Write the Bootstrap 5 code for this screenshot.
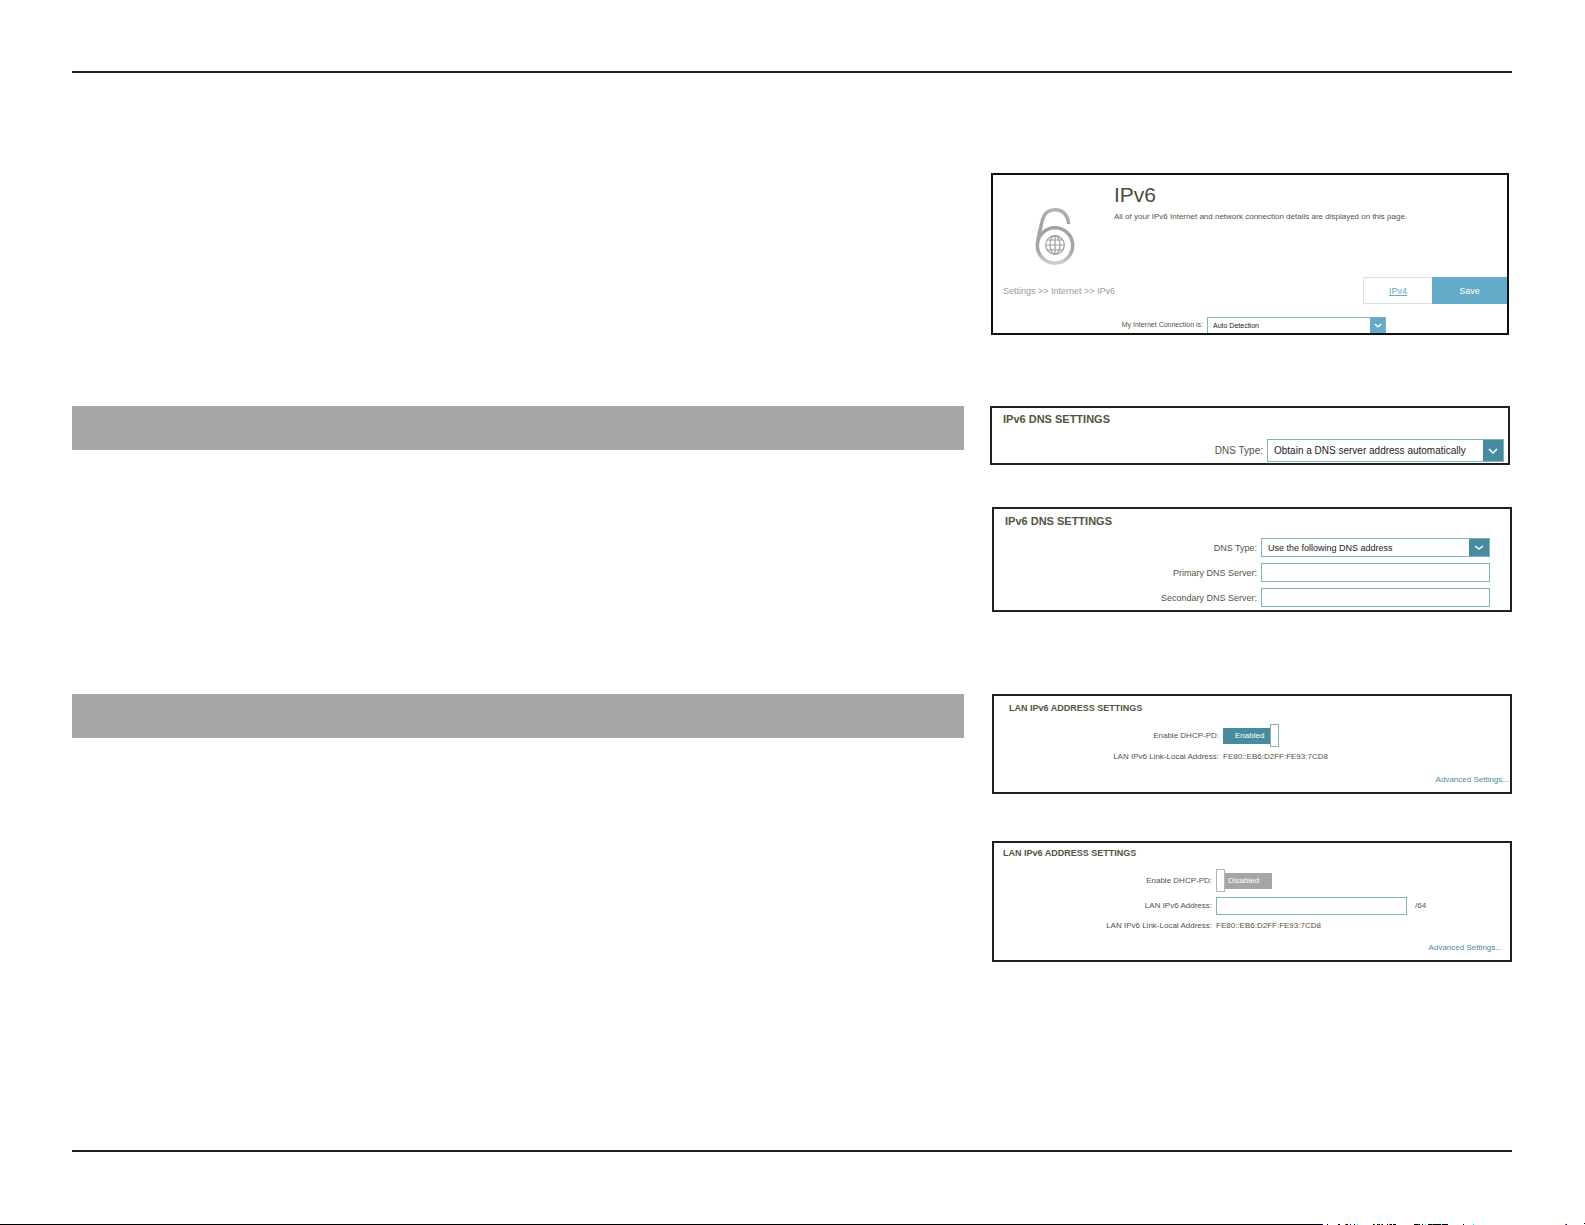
<!DOCTYPE html>
<html lang="en">
<head>
<meta charset="utf-8">
<meta name="viewport" content="width=device-width, initial-scale=1">
<title>IPv6 settings</title>
<link href="https://cdn.jsdelivr.net/npm/bootstrap@5.3.0/dist/css/bootstrap.min.css" rel="stylesheet">
<style>
  :root { --ink: #231f20; --olive: #55533f; --teal: #478c9e; --line: #7fb3bd; --sky: #63abc8; --grey: #a6a6a5; }
  body { font-family: "Liberation Sans", Arial, sans-serif; font-size: 8px; line-height: 12px; color: var(--olive); background: #fff; }
  .sheet { padding: 71px 73px 0 72px; }
  .rule { height: 2px; background: var(--ink); }
  .band { display: grid; grid-template-columns: minmax(0, 892fr) minmax(0, 522fr); column-gap: 26px; align-items: start; }
  .bar { height: 44px; background: var(--grey); }
  .panel { border: 2px solid var(--ink); background: #fff; overflow: hidden; }
  .panel-wan { border-color: #111; margin: 0 3px 0 1px; }
  .panel-auto { margin-right: 2px; padding: 3px 0 1px; font-size: 10px; }
  .panel-manual { margin-left: 2px; padding: 4px 0 3px; font-size: 9px; }
  .panel-lan { margin-left: 2px; padding: 4px 0 6px; }
  .panel-static { padding-top: 2px; }
  .title { font-size: 11px; font-weight: 700; line-height: 16px; margin: 0; padding-left: 11px; }
  .panel-lan .title { font-size: 9px; padding-left: 15px; }
  .panel-static .title { padding-left: 9px; }
  .field { display: grid; grid-template-columns: var(--label) auto; justify-content: start; align-items: center; column-gap: 4px; }
  .field > :first-child { text-align: right; white-space: nowrap; }
  .panel-wan .field { --label: 210px; font-size: 7px; margin-top: 13px; }
  .panel-auto .field { --label: 271px; margin-top: 12px; }
  .panel-manual .field { --label: 263px; margin-top: 6px; }
  .panel-manual .title + .field { margin-top: 9px; }
  .panel-lan .field { --label: 225px; margin-top: 4px; }
  .panel-static .field { --label: 218px; margin-top: 5px; }
  .panel-lan .title + .field { margin-top: 8px; }
  .pick { display: grid; grid-template-columns: 1fr 20px; width: 229px; height: 19px; border: 1px solid var(--line); }
  .pick select { grid-area: 1 / 1 / 2 / 3; appearance: none; border: 0; border-radius: 0; background: transparent; color: #222; font: inherit; padding: 0 24px 0 6px; min-width: 0; }
  .pick span { grid-area: 1 / 2; background: var(--teal); pointer-events: none; display: flex; align-items: center; justify-content: center; }
  .panel-auto .pick { width: 237px; height: 23px; }
  .panel-wan .pick { width: 179px; height: 16px; border-bottom: 0; grid-template-columns: 1fr 15px; }
  .panel-wan .pick select { padding-left: 5px; }
  .panel-wan .pick span { background: var(--sky); }
  .entry { width: 229px; height: 19px; border: 1px solid var(--line); padding: 0 6px; background: #fff; font: inherit; border-radius: 0; display: block; }
  .panel-static .entry { width: 191px; height: 18px; }
  .lock-cell { width: 121px; padding: 33px 0 0 42px; }
  .intro { height: 102px; }
  .intro h1 { font-size: 21px; line-height: 24px; font-weight: 400; margin: 8px 0 4px; color: #4d4a3b; }
  .crumbs { font-size: 9px; color: #9b9b9b; padding-left: 10px; }
  .act { font-size: 9px; height: 27px; border: 1px solid #dcdfe0; display: flex; align-items: center; justify-content: center; padding: 0; }
  .act-link { width: 69px; color: var(--sky); border-right: 0; }
  .act-save { width: 75px; background: var(--sky); border-color: var(--sky); color: #fff; }
  .toggle { display: flex; align-items: center; }
  .toggle b { font-weight: 400; width: 47px; height: 16px; line-height: 16px; background: var(--teal); color: #fff; padding-left: 12px; }
  .toggle i { width: 9px; height: 23px; border: 1px solid var(--line); background: #fff; }
  .toggle-off b { background: var(--grey); padding-left: 3px; }
  .toggle-off i { border-color: #b5b5b5; }
  .more { margin-top: 11px; padding-right: 1px; text-align: right; }
  .panel-static .more { margin-top: 10px; padding-right: 8px; }
  .more a { color: var(--teal); text-decoration: none; }
  .gap-top { margin-top: 100px; }
  .gap-dns { margin-top: 71px; }
  .gap-next { margin-top: 42px; }
  .gap-lan { margin-top: 82px; }
  .gap-static { margin-top: 47px; }
  .gap-end { margin-top: 188px; }
  .edge { margin-top: auto; display: block; flex: none; }
</style>
</head>
<body class="d-flex flex-column min-vh-100">
<main class="sheet">
  <div class="rule"></div>

  <section class="band gap-top">
    <div></div>
    <div class="panel panel-wan">
      <div class="intro d-flex">
        <div class="lock-cell flex-shrink-0">
          <svg width="40" height="58" viewBox="0 0 40 58" fill="none" aria-hidden="true">
            <defs>
              <linearGradient id="metal" x1="0" y1="0" x2="0" y2="58" gradientUnits="userSpaceOnUse">
                <stop offset="0" stop-color="#b2b2b2"/><stop offset=".3" stop-color="#a2a2a2"/>
                <stop offset=".75" stop-color="#a8a8a8"/><stop offset="1" stop-color="#d6d6d6"/>
              </linearGradient>
            </defs>
            <path d="M2.8 32 7.5 11.500C9.500 5 14 1.800 20 1.800c8 0 12.500 5 13.700 14.200" stroke="url(#metal)" stroke-width="3.400"/>
            <circle cx="20" cy="37.500" r="17.700" stroke="url(#metal)" stroke-width="3.600"/>
            <g stroke="#9c9c9c" stroke-width="1.200">
              <circle cx="20" cy="37" r="9.300"/>
              <ellipse cx="20" cy="37" rx="5" ry="9.300"/>
              <path d="M20 27.700v18.600M10.700 37h18.600M12.200 32h15.600M12.200 42h15.600"/>
            </g>
          </svg>
        </div>
        <div>
          <h1>IPv6</h1>
          <p class="mb-0 text-nowrap">All of your IPv6 Internet and network connection details are displayed on this page.</p>
        </div>
      </div>
      <div class="d-flex align-items-center">
        <div class="crumbs me-auto">Settings &gt;&gt; Internet &gt;&gt; IPv6</div>
        <a class="act act-link" href="#">IPv4</a>
        <button class="act act-save" type="button">Save</button>
      </div>
      <div class="field">
        <label for="wan-type">My Internet Connection is:</label>
        <div class="pick">
          <select id="wan-type"><option>Auto Detection</option></select>
          <span><svg width="8" height="5" viewBox="0 0 8 5" fill="none" stroke="#fff" stroke-width="1.500"><path d="M.8 1 4 3.800 7.200 1"/></svg></span>
        </div>
      </div>
    </div>
  </section>

  <section class="band gap-dns">
    <div class="bar"></div>
    <div>
      <div class="panel panel-auto">
        <h2 class="title">IPv6 DNS SETTINGS</h2>
        <div class="field">
          <label for="dns-auto">DNS Type:</label>
          <div class="pick">
            <select id="dns-auto"><option>Obtain a DNS server address automatically</option></select>
            <span><svg width="10" height="6" viewBox="0 0 10 6" fill="none" stroke="#fff" stroke-width="1.500"><path d="M1 1 5 5 9 1"/></svg></span>
          </div>
        </div>
      </div>
      <div class="panel panel-manual gap-next">
        <h2 class="title">IPv6 DNS SETTINGS</h2>
        <div class="field">
          <label for="dns-manual">DNS Type:</label>
          <div class="pick">
            <select id="dns-manual"><option>Use the following DNS address</option></select>
            <span><svg width="10" height="5" viewBox="0 0 10 5" fill="none" stroke="#fff" stroke-width="1.500"><path d="M1 1 5 4 9 1"/></svg></span>
          </div>
        </div>
        <div class="field">
          <label for="dns-one">Primary DNS Server:</label>
          <input class="entry" id="dns-one" type="text">
        </div>
        <div class="field">
          <label for="dns-two">Secondary DNS Server:</label>
          <input class="entry" id="dns-two" type="text">
        </div>
      </div>
    </div>
  </section>

  <section class="band gap-lan">
    <div class="bar"></div>
    <div>
      <div class="panel panel-lan">
        <h2 class="title">LAN IPv6 ADDRESS SETTINGS</h2>
        <div class="field">
          <label for="pd-on">Enable DHCP-PD:</label>
          <label class="toggle"><input class="visually-hidden" id="pd-on" type="checkbox" checked><b>Enabled</b><i></i></label>
        </div>
        <div class="field">
          <span>LAN IPv6 Link-Local Address:</span>
          <span>FE80::EB6:D2FF:FE93:7CD8</span>
        </div>
        <div class="more"><a href="#">Advanced Settings...</a></div>
      </div>
      <div class="panel panel-lan panel-static gap-static">
        <h2 class="title">LAN IPv6 ADDRESS SETTINGS</h2>
        <div class="field">
          <label for="pd-off">Enable DHCP-PD:</label>
          <label class="toggle toggle-off"><input class="visually-hidden" id="pd-off" type="checkbox"><i></i><b>Disabled</b></label>
        </div>
        <div class="field">
          <label for="lan-address">LAN IPv6 Address:</label>
          <div class="d-flex align-items-center"><input class="entry me-1" id="lan-address" type="text"><span class="ps-1">/64</span></div>
        </div>
        <div class="field">
          <span>LAN IPv6 Link-Local Address:</span>
          <span>FE80::EB6:D2FF:FE93:7CD8</span>
        </div>
        <div class="more"><a href="#">Advanced Settings...</a></div>
      </div>
    </div>
  </section>

  <div class="rule gap-end"></div>
</main>
<svg class="edge" width="100%" height="2" shape-rendering="crispEdges" aria-hidden="true">
  <path d="M0 1h1322v1H0zM1327 1h1v1h-1zM1338 1h2v1h-2zM1346 1h2v1h-2zM1350 1h1v1h-1zM1354 1h1v1h-1zM1373 1h2v1h-2zM1377 1h3v1h-3zM1382 1h1v1h-1zM1387 1h1v1h-1zM1390 1h2v1h-2zM1393 1h3v1h-3zM1414 1h6v1h-6zM1422 1h1v1h-1zM1428 1h20v1h-20zM1463 1h1v1h-1zM1584 0h1v1h-1z"/>
  <path d="M1345 1h1v1h-1zM1381 1h1v1h-1zM1389 1h1v1h-1zM1565 1h1v1h-1z" fill="#f40"/>
  <path d="M1322 1h1v1h-1zM1350 1h1v1h-1zM1566 1h1v1h-1z" fill="#00f"/>
  <path d="M1357 1h1v1h-1zM1425 1h1v1h-1zM1441 1h1v1h-1zM1473 1h1v1h-1z" fill="#0ff"/>
  <path d="M1374 1h1v1h-1zM1378 1h1v1h-1zM1418 1h1v1h-1zM1432 1h1v1h-1z" fill="#080"/>
</svg>
<script src="https://cdn.jsdelivr.net/npm/bootstrap@5.3.0/dist/js/bootstrap.bundle.min.js"></script>
</body>
</html>
